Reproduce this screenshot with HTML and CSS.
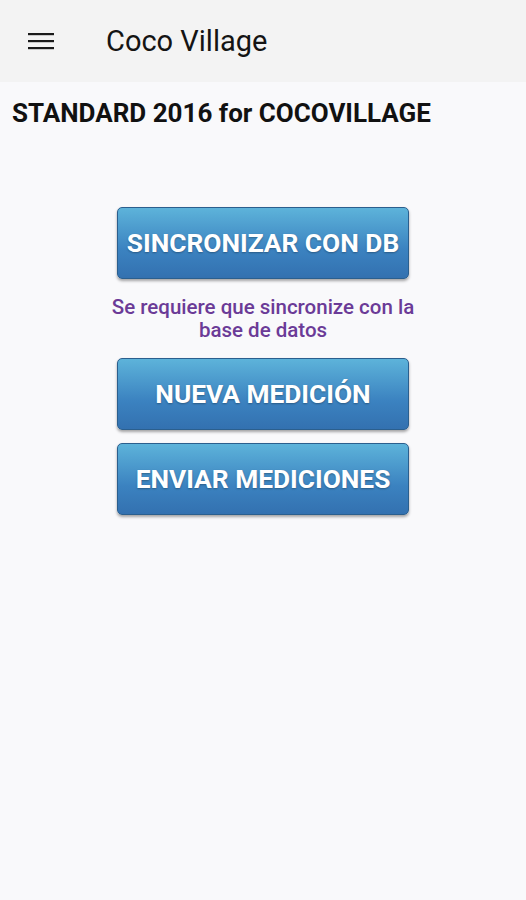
FILE: index.html
```html
<!DOCTYPE html>
<html lang="es">
<head>
    <meta charset="UTF-8">
    <meta name="viewport" content="width=device-width, initial-scale=1.0">
    <title>Coco Village</title>
    <link rel="stylesheet" href="styles.css">
</head>
<body>
    <header class="toolbar">
        <button class="menu-btn" aria-label="Menu">
            <svg width="26" height="18" viewBox="0 0 26 18">
                <rect x="0" y="1" width="26" height="2.2" fill="#1a1a1a"/>
                <rect x="0" y="8" width="26" height="2.2" fill="#1a1a1a"/>
                <rect x="0" y="15" width="26" height="2.2" fill="#1a1a1a"/>
            </svg>
        </button>
        <h1 class="title">Coco Village</h1>
    </header>
    <main class="content">
        <h2 class="standard">STANDARD 2016 for COCOVILLAGE</h2>
        <div class="actions">
            <button class="action">SINCRONIZAR CON DB</button>
            <p class="notice">Se requiere que sincronize con la<br>base de datos</p>
            <button class="action">NUEVA MEDICIÓN</button>
            <button class="action">ENVIAR MEDICIONES</button>
        </div>
    </main>
</body>
</html>
```
FILE: styles.css
```css
body {
    margin: 0;
    font-family: Roboto, "Noto Sans", Arial, sans-serif;
    background-color: #f9f9fb;
    color: #111;
}

.toolbar {
    display: flex;
    align-items: center;
    height: 82px;
    background-color: #f3f3f3;
}

.menu-btn {
    display: flex;
    align-items: center;
    justify-content: center;
    margin-left: 28px;
    padding: 0;
    border: none;
    background: none;
}

.title {
    margin: 0 0 0 52px;
    font-size: 29px;
    font-weight: 400;
    color: #141414;
}

.content {
    padding: 0 12px;
}

.standard {
    margin: 16px 0 0;
    font-size: 26px;
    font-weight: 700;
    color: #111;
    line-height: 30px;
}

.actions {
    display: flex;
    flex-direction: column;
    align-items: center;
    margin-top: 79px;
}

.action {
    width: 292px;
    height: 72px;
    margin-bottom: 13px;
    border: 1px solid #2b5f8e;
    border-radius: 5px;
    background: linear-gradient(#5db3da, #3b82c0 60%, #3371b0);
    box-shadow: 0 2px 3px rgba(0, 0, 0, 0.35);
    color: #fff;
    font-family: Roboto, "Noto Sans", Arial, sans-serif;
    font-size: 26.3px;
    font-weight: 700;
    text-shadow: 0 1px 2px rgba(0, 0, 0, 0.3);
    cursor: pointer;
}

.notice {
    margin: 4px 0 16px;
    text-align: center;
    font-size: 20.5px;
    font-weight: 500;
    line-height: 23px;
    color: #6b3b97;
}
```
